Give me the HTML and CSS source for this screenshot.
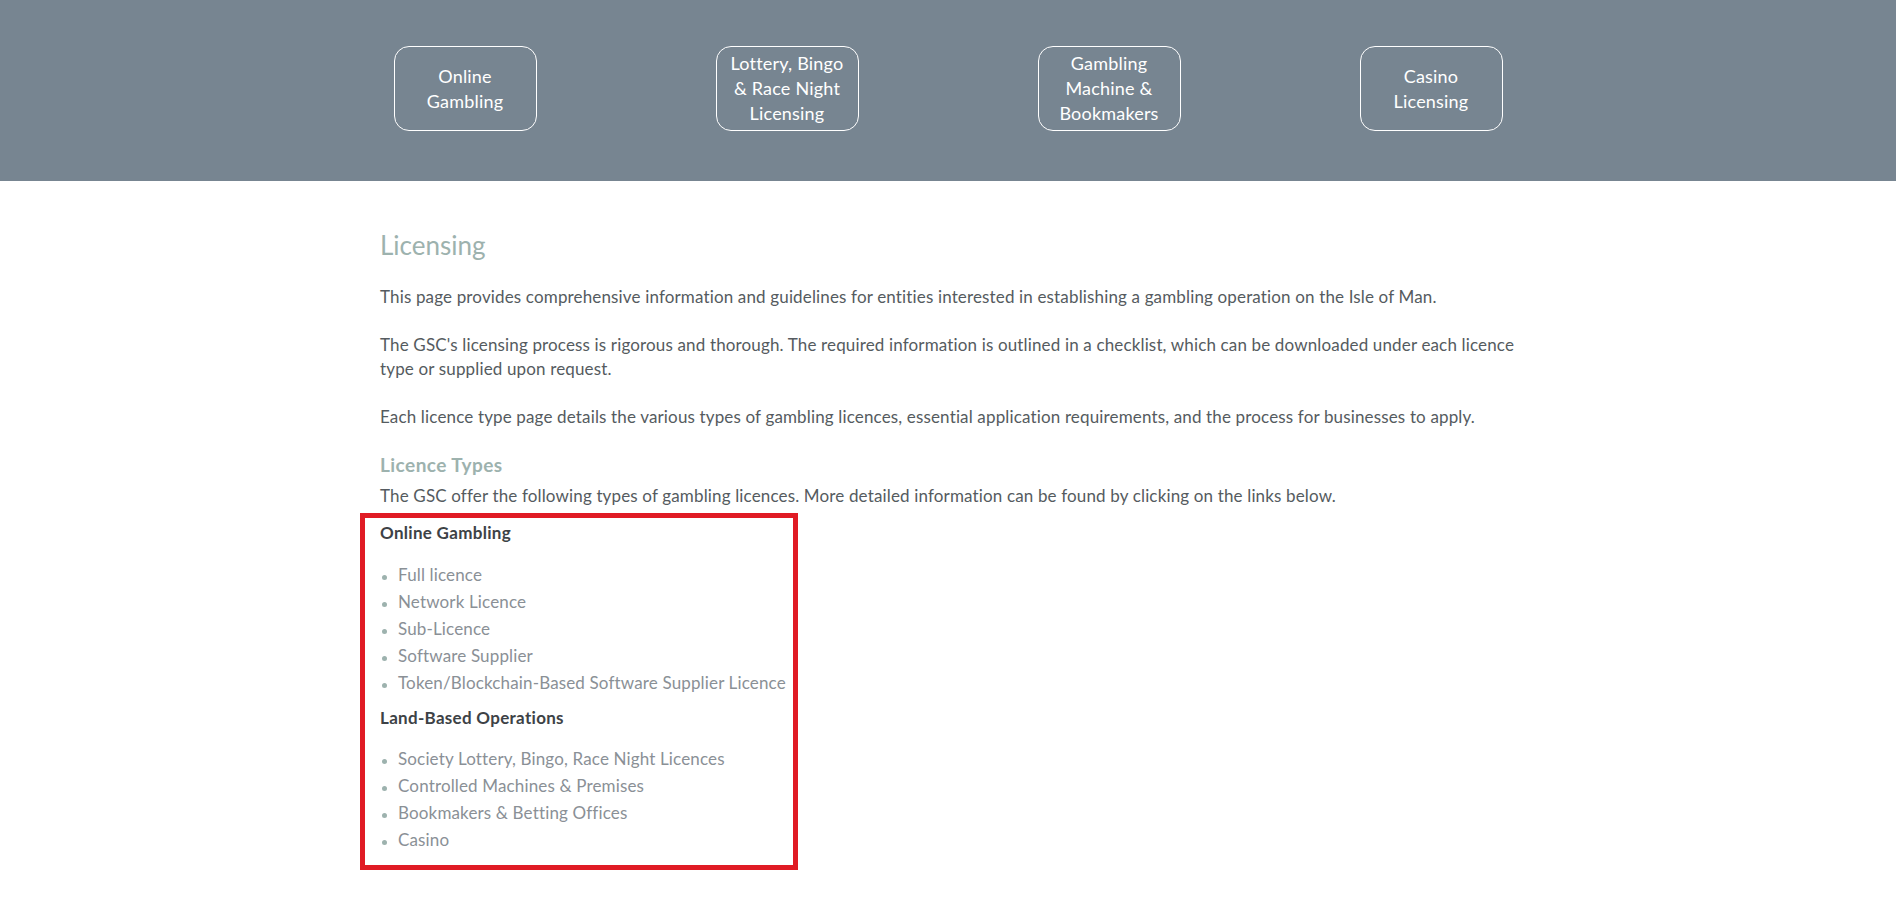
FILE: index.html
```html
<!DOCTYPE html>
<html lang="en">
<head>
    <meta charset="UTF-8">
    <meta name="viewport" content="width=device-width, initial-scale=1.0">
    <title>Licensing</title>
    <link rel="stylesheet" href="styles.css">
</head>
<body>

    <!-- Licence type buttons -->
    <div class="banner">
        <div class="banner-row">
            <div class="banner-col"><a class="banner-btn" href="#">Online<br>Gambling</a></div>
            <div class="banner-col"><a class="banner-btn" href="#">Lottery, Bingo<br>&amp; Race Night<br>Licensing</a></div>
            <div class="banner-col"><a class="banner-btn" href="#">Gambling<br>Machine &amp;<br>Bookmakers</a></div>
            <div class="banner-col"><a class="banner-btn" href="#">Casino<br>Licensing</a></div>
        </div>
    </div>

    <!-- Main Content -->
    <div class="container">
        <h1 class="page-title">Licensing</h1>

        <p>This page provides comprehensive information and guidelines for entities interested in establishing a gambling operation on the Isle of Man.</p>
        <p>The GSC's licensing process is rigorous and thorough. The required information is outlined in a checklist, which can be downloaded under each licence type or supplied upon request.</p>
        <p>Each licence type page details the various types of gambling licences, essential application requirements, and the process for businesses to apply.</p>

        <h2 class="sub-title">Licence Types</h2>
        <p class="intro">The GSC offer the following types of gambling licences. More detailed information can be found by clicking on the links below.</p>

        <div class="highlight">
            <h3 class="group-title">Online Gambling</h3>
            <ul class="licence-list">
                <li>Full licence</li>
                <li>Network Licence</li>
                <li>Sub-Licence</li>
                <li>Software Supplier</li>
                <li>Token/Blockchain-Based Software Supplier Licence</li>
            </ul>

            <h3 class="group-title">Land-Based Operations</h3>
            <ul class="licence-list">
                <li>Society Lottery, Bingo, Race Night Licences</li>
                <li>Controlled Machines &amp; Premises</li>
                <li>Bookmakers &amp; Betting Offices</li>
                <li>Casino</li>
            </ul>
        </div>
    </div>

</body>
</html>
```

FILE: styles.css
```css
body {
    font-family: Lato, "Open Sans", Arial, sans-serif;
    margin: 0;
    padding: 0;
    color: #555b60;
    background: white;
}

/* Banner */
.banner {
    background: #778591;
    height: 181px;
    padding-top: 46px;
    box-sizing: border-box;
}
.banner-row {
    display: grid;
    grid-template-columns: repeat(4, 322px);
    justify-content: center;
}
.banner-col {
    display: flex;
    justify-content: center;
}
.banner-btn {
    display: flex;
    align-items: center;
    justify-content: center;
    width: 143px;
    height: 85px;
    box-sizing: border-box;
    border: 1px solid white;
    border-radius: 15px;
    color: white;
    text-decoration: none;
    text-align: center;
    font-size: 18px;
    line-height: 25px;
    letter-spacing: 0.2px;
}

/* Main Content */
.container {
    width: 1170px;
    box-sizing: border-box;
    margin: 0 auto;
    padding: 0 17px;
}
.page-title {
    font-size: 26px;
    font-weight: normal;
    color: #9db2ae;
    margin: 48px 0 24px;
}
.container p {
    font-size: 17px;
    letter-spacing: 0.15px;
    line-height: 24px;
    margin: 0 0 24px;
}
.sub-title {
    font-size: 19px;
    font-weight: bold;
    letter-spacing: 0.45px;
    color: #9db2ae;
    margin: 0 0 8px;
}
.container p.intro {
    margin-bottom: 5px;
}

/* Red outlined box */
.highlight {
    border: 5px solid #e01b24;
    margin-left: -20px;
    width: 408px;
    padding: 4px 5px 12px 15px;
}
.group-title {
    font-size: 17px;
    font-weight: bold;
    letter-spacing: 0.3px;
    color: #3d4246;
    margin: 0 0 18px;
}
.group-title + .licence-list + .group-title {
    margin-bottom: 17px;
}
.licence-list {
    list-style: none;
    padding: 0;
    margin: 0 0 11px;
}
.licence-list li {
    font-size: 17px;
    letter-spacing: 0.15px;
    line-height: 27px;
    color: #8a9096;
    padding-left: 18px;
    position: relative;
    white-space: nowrap;
}
.licence-list li::before {
    content: "";
    position: absolute;
    left: 2px;
    top: 14px;
    width: 5px;
    height: 5px;
    border-radius: 50%;
    background: #9db2ae;
}
.licence-list:last-child {
    margin-bottom: 0;
}
```
